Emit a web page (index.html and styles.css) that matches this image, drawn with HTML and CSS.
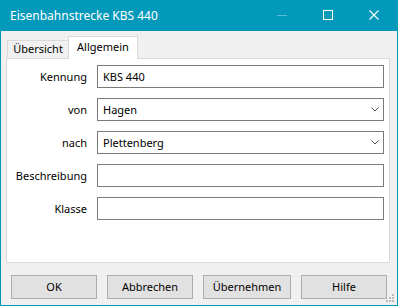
FILE: index.html
```html
<!DOCTYPE html>
<html lang="de">
<head>
<meta charset="utf-8">
<title>Eisenbahnstrecke KBS 440</title>
<link rel="stylesheet" href="styles.css">
</head>
<body>
<div class="window">
  <div class="titlebar">
    <span class="title">Eisenbahnstrecke KBS 440</span>
    <div class="caption-buttons">
      <span class="cbtn min"><svg width="10" height="10" viewBox="0 0 10 10"><line x1="0" y1="5.5" x2="10" y2="5.5" stroke="rgba(255,255,255,0.35)" stroke-width="1"/></svg></span>
      <span class="cbtn"><svg width="10" height="10" viewBox="0 0 10 10"><rect x="0.5" y="0.5" width="9" height="9" fill="none" stroke="#fff" stroke-width="1"/></svg></span>
      <span class="cbtn"><svg width="10" height="10" viewBox="0 0 10 10"><path d="M0.5 0.5 L9.5 9.5 M9.5 0.5 L0.5 9.5" stroke="#fff" stroke-width="1.1" fill="none"/></svg></span>
    </div>
  </div>
  <div class="client">
    <div class="tabs">
      <div class="tab">Übersicht</div>
      <div class="tab active">Allgemein</div>
    </div>
    <div class="panel">
      <div class="form">
        <label class="label">Kennung</label>
        <div class="field"><span>KBS 440</span></div>
        <label class="label">von</label>
        <div class="field select"><span>Hagen</span><svg class="chev" width="8" height="5" viewBox="0 0 8 5"><polyline points="0.5,0.5 4,4 7.5,0.5" fill="none" stroke="#505050" stroke-width="1"/></svg></div>
        <label class="label">nach</label>
        <div class="field select"><span>Plettenberg</span><svg class="chev" width="8" height="5" viewBox="0 0 8 5"><polyline points="0.5,0.5 4,4 7.5,0.5" fill="none" stroke="#505050" stroke-width="1"/></svg></div>
        <label class="label">Beschreibung</label>
        <div class="field"></div>
        <label class="label">Klasse</label>
        <div class="field"></div>
      </div>
    </div>
    <div class="buttons">
      <div class="btn">OK</div>
      <div class="btn">Abbrechen</div>
      <div class="btn wide">Übernehmen</div>
      <div class="btn">Hilfe</div>
    </div>
    <svg class="grip" width="9" height="9" viewBox="0 0 9 9">
      <rect x="6" y="0" width="2" height="2" fill="#bcbcbc"/>
      <rect x="3" y="3" width="2" height="2" fill="#bcbcbc"/>
      <rect x="6" y="3" width="2" height="2" fill="#bcbcbc"/>
      <rect x="0" y="6" width="2" height="2" fill="#bcbcbc"/>
      <rect x="3" y="6" width="2" height="2" fill="#bcbcbc"/>
      <rect x="6" y="6" width="2" height="2" fill="#bcbcbc"/>
    </svg>
  </div>
</div>
</body>
</html>
```
FILE: styles.css
```css
html, body {
  margin: 0;
  padding: 0;
}
body {
  width: 398px;
  height: 306px;
  overflow: hidden;
  font-family: "Noto Sans", "Open Sans", sans-serif;
  font-size: 11px;
  color: #000;
}
.window {
  box-sizing: border-box;
  width: 398px;
  height: 306px;
  border: 1px solid #0399bb;
  border-top: 0;
  background: #f0f0f0;
  display: flex;
  flex-direction: column;
  position: relative;
}
.titlebar {
  height: 31px;
  flex: none;
  background: #0399bb;
  color: #fff;
  display: flex;
  align-items: center;
  padding-left: 9px;
  font-size: 12px;
}
.title {
  padding-bottom: 1px;
}
.caption-buttons {
  margin-left: auto;
  display: flex;
  height: 31px;
}
.cbtn {
  width: 46px;
  height: 31px;
  display: flex;
  justify-content: center;
  align-items: flex-start;
  padding-top: 10px;
  box-sizing: border-box;
}
.cbtn svg {
  display: block;
}
.client {
  flex: 1;
  padding: 5px 0 0 5px;
  display: flex;
  flex-direction: column;
}
.tabs {
  display: flex;
  align-items: flex-end;
  height: 22px;
  padding-left: 1px;
}
.tab {
  box-sizing: border-box;
  height: 18px;
  width: 62px;
  border: 1px solid #d9d9d9;
  border-bottom: 0;
  background: #f0f0f0;
  text-align: center;
  line-height: 16px;
}
.tab.active {
  position: relative;
  z-index: 1;
  width: 70px;
  height: 23px;
  margin-left: -1px;
  margin-bottom: -1px;
  background: #fff;
  line-height: 19px;
}
.panel {
  box-sizing: border-box;
  width: 384px;
  height: 205px;
  border: 1px solid #d9d9d9;
  background: #fff;
  padding: 6px 5px 0 0;
}
.form {
  display: grid;
  grid-template-columns: 80px 1fr;
  column-gap: 10px;
  row-gap: 10px;
  grid-auto-rows: 23px;
}
.label {
  display: flex;
  align-items: center;
  justify-content: flex-end;
  padding-bottom: 1px;
}
.field {
  box-sizing: border-box;
  height: 23px;
  border: 1px solid #7a7a7a;
  background: #fff;
  display: flex;
  align-items: center;
  padding-left: 5px;
  padding-bottom: 1px;
}
.select {
  justify-content: space-between;
}
.chev {
  margin-right: 4px;
  margin-top: 1px;
  display: block;
}
.buttons {
  display: flex;
  gap: 10px;
  margin-top: 12px;
  padding-left: 5px;
}
.btn {
  box-sizing: border-box;
  width: 86px;
  height: 24px;
  border: 1px solid #adadad;
  background: #e1e1e1;
  display: flex;
  align-items: center;
  justify-content: center;
  padding-bottom: 1px;
}
.btn.wide {
  width: 88px;
}
.grip {
  position: absolute;
  right: 2px;
  bottom: 2px;
  display: block;
}
```
